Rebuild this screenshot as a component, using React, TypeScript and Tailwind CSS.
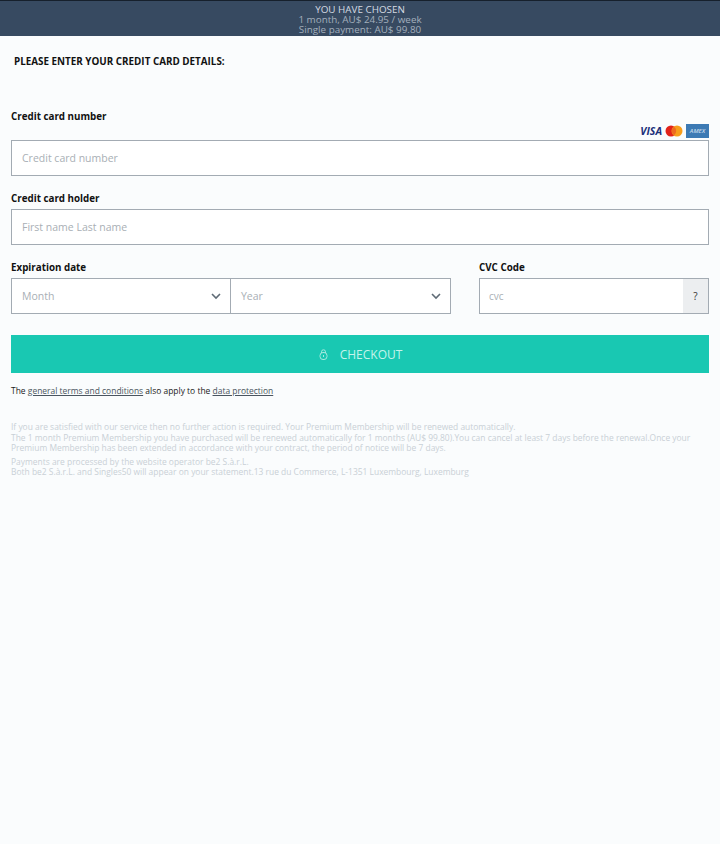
import React from "react";

function Chevron() {
  return (
    <svg width="10" height="7" viewBox="0 0 10 7" fill="none" className="shrink-0">
      <path d="M1 1l4 4 4-4" stroke="#5f6b76" strokeWidth="1.6" />
    </svg>
  );
}

function Field({ children }: { children: React.ReactNode }) {
  return (
    <div className="h-[36px] flex items-center bg-white border border-[#a3abb3] text-[10.5px] text-[#a9afb5] pl-[10px]">
      {children}
    </div>
  );
}

function Hint({ children }: { children: React.ReactNode }) {
  return <span className="flex-1 pt-[2px]">{children}</span>;
}

function Label({ children }: { children: React.ReactNode }) {
  return <div className="text-[9.8px] leading-[14px] font-bold text-[#111]">{children}</div>;
}

export default function App() {
  return (
    <div className="w-[720px] h-[844px] bg-[#fafcfd] font-['Open_Sans',sans-serif]">
      <header className="h-[36px] bg-[#374a61] border-t border-[#16202c] flex flex-col items-center text-[9.85px] leading-[10px] pt-[3px] text-[#a3afbc]">
        <div className="text-[#d5dbe1]">YOU HAVE CHOSEN</div>
        <div>1 month, AU$ 24.95 / week</div>
        <div>Single payment: AU$ 99.80</div>
      </header>

      <h1 className="text-[9.85px] leading-[14px] font-bold text-[#111] ml-[14px] mt-[18px]">
        PLEASE ENTER YOUR CREDIT CARD DETAILS:
      </h1>

      <main className="px-[11px] mt-[42px]">
        <Label>Credit card number</Label>
        <div className="flex justify-end items-center gap-[3px] h-[14px] mb-[2px]">
          <span className="text-[10.5px] leading-none font-bold italic text-[#1a2f7a]">VISA</span>
          <svg width="18" height="12" viewBox="0 0 18 12">
            <circle cx="6" cy="6" r="5.5" fill="#e2231a" />
            <circle cx="12" cy="6" r="5.5" fill="#f79e1b" />
            <path d="M9 1.6a5.5 5.5 0 0 1 0 8.8a5.5 5.5 0 0 1 0-8.8z" fill="#ee6a1f" />
          </svg>
          <span className="w-[23px] h-[14px] bg-[#3c7ab4] flex items-center justify-center text-[6px] leading-none italic font-semibold text-[#c3d9ec] overflow-hidden">
            AMEX
          </span>
        </div>
        <Field><Hint>Credit card number</Hint></Field>

        <div className="mt-[16px] mb-[3px]"><Label>Credit card holder</Label></div>
        <Field><Hint>First name Last name</Hint></Field>

        <div className="flex mt-[16px]">
          <div className="w-[440px]">
            <div className="mb-[3px]"><Label>Expiration date</Label></div>
            <div className="flex">
              <div className="w-[220px]">
                <Field>
                  <Hint>Month</Hint>
                  <span className="mr-[9px] flex"><Chevron /></span>
                </Field>
              </div>
              <div className="w-[221px] -ml-px">
                <Field>
                  <Hint>Year</Hint>
                  <span className="mr-[9px] flex"><Chevron /></span>
                </Field>
              </div>
            </div>
          </div>
          <div className="ml-[28px] flex-1">
            <div className="mb-[3px]"><Label>CVC Code</Label></div>
            <Field>
              <span className="flex-1 text-[10px] -ml-px">cvc</span>
              <span className="w-[25px] h-full bg-[#eceef0] flex items-center justify-center text-[10px] text-[#333]">?</span>
            </Field>
          </div>
        </div>

        <button className="mt-[21px] w-full h-[38px] bg-[#19c8b2] flex items-center justify-center gap-[12px] text-[12px] text-[#c5f3ec] pl-[1px] pt-[1px]">
          <svg width="9" height="11" viewBox="0 0 9 11" fill="none" stroke="#a5e9df" strokeWidth="1">
            <rect x="1" y="3.5" width="7" height="7" rx="3" />
            <path d="M2.5 4V2.8a2 2 0 0 1 4 0V4" />
            <path d="M4.5 6v2" />
          </svg>
          CHECKOUT
        </button>

        <p className="mt-[11px] text-[8.46px] leading-[14px] text-[#222]">
          The <a className="underline text-[#4a5560]">general terms and conditions</a> also apply to the{" "}
          <a className="underline text-[#4a5560]">data protection</a>
        </p>

        <div className="mt-[24px] text-[8.45px] leading-[10.5px] text-[#c9d0d6]">
          <p>If you are satisfied with our service then no further action is required. Your Premium Membership will be renewed automatically.</p>
          <p>The 1 month Premium Membership you have purchased will be renewed automatically for 1 months (AU$ 99.80).You can cancel at least 7 days before the renewal.Once your Premium Membership has been extended in accordance with your contract, the period of notice will be 7 days.</p>
          <p className="mt-[3px]">Payments are processed by the website operator be2 S.à.r.L.</p>
          <p>Both be2 S.à.r.L. and Singles50 will appear on your statement.13 rue du Commerce, L-1351 Luxembourg, Luxemburg</p>
        </div>
      </main>
    </div>
  );
}
